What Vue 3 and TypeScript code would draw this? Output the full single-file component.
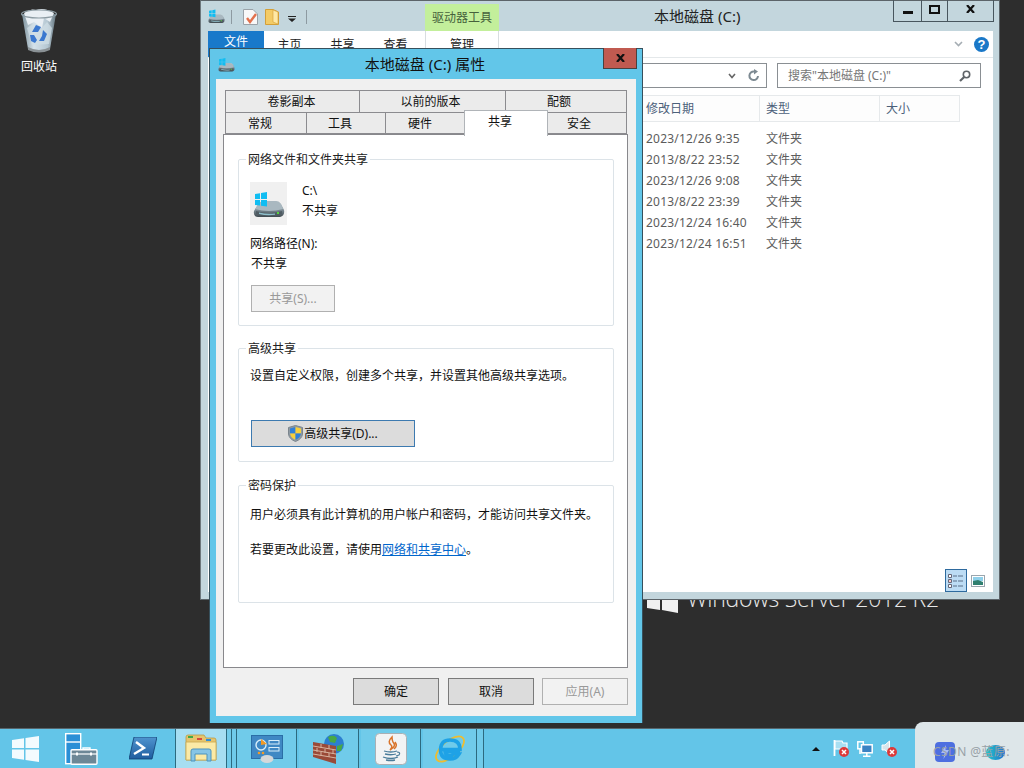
<script setup lang="ts">
const ribbonTabs = ['主页', '共享', '查看']
const rows = [
  '2023/12/26 9:35',
  '2013/8/22 23:52',
  '2023/12/26 9:08',
  '2013/8/22 23:39',
  '2023/12/24 16:40',
  '2023/12/24 16:51',
]
const tabsTop = [
  { label: '卷影副本', cls: 'w134' },
  { label: '以前的版本', cls: 'w146' },
  { label: '配额', cls: 'w121' },
]
const tabsBottom = [
  { label: '常规', cls: 'w81', active: false },
  { label: '工具', cls: 'w79', active: false },
  { label: '硬件', cls: 'w79 hw', active: false },
  { label: '共享', cls: 'w83', active: true },
  { label: '安全', cls: 'w79 sec', active: false },
]
</script>

<template>
  <div class="desktop">
    <svg class="defs" width="0" height="0" aria-hidden="true">
      <defs>
        <linearGradient id="driveBody" x1="0" y1="0" x2="0" y2="1">
          <stop offset="0" stop-color="#c9d3d8" />
          <stop offset="0.55" stop-color="#7d8c95" />
          <stop offset="1" stop-color="#3f4a50" />
        </linearGradient>
        <symbol id="drive" viewBox="0 0 32 26">
          <path d="M6 11 Q8 9 12 9 H23 Q26 9 28 12 L31 18 Q32 24 27 25 H5 Q0 25 1 19 Z" fill="url(#driveBody)" />
          <path d="M6 11 Q8 9 12 9 H23 Q26 9 28 12 L30 17 Q16 21 2 17 Z" fill="#a9b8c0" />
          <path d="M3 19 Q16 23 29 19 L29 22 Q16 25 3 22 Z" fill="#4f5c63" />
          <path d="M6 20.500 Q14 22.500 22 21.500 V22.800 Q14 24 6 22 Z" fill="#8fc0cc" />
          <rect x="24" y="20" width="2" height="2" fill="#56d23c" />
          <path d="M2 2 L7 1.200 V7 H2 Z M8 1 L14 0 V7 H8 Z M2 8 H7 V13.500 L2 13 Z M8 8 H14 V14.500 L8 13.700 Z" fill="#10bdf2" />
        </symbol>
      </defs>
    </svg>

    <div class="recycle">
      <svg width="38" height="46" viewBox="0 0 38 46">
        <defs>
          <linearGradient id="binGlass" x1="0" y1="0" x2="1" y2="0">
            <stop offset="0" stop-color="#7d929d" />
            <stop offset="0.35" stop-color="#d5e2ea" />
            <stop offset="0.75" stop-color="#b5c7d2" />
            <stop offset="1" stop-color="#65767f" />
          </linearGradient>
        </defs>
        <path d="M2 6 L8 41 Q19 47 30 41 L36 6 Z" fill="url(#binGlass)" />
        <path d="M4 5 Q10 0 16 2 Q24 -1 34 5 L30 14 L24 10 L22 20 L14 14 L8 17 Z" fill="#e9eff4" />
        <path d="M7 20 L13 16 L20 22 L27 14 L32 20 L29 36 L12 37 Z" fill="#cfdde6" opacity=".75" />
        <path d="M12 24 L16 17 L21 19 L18 24 Z M23 22 L27 26 L24 33 L19 33 L22 28 Z M10 27 L14 27 L17 32 L15 35 L11 33 Z" fill="#3b78cf" />
        <path d="M8 39 Q19 45 30 39 L30 42 Q19 47 8 42 Z" fill="#8a9195" />
        <ellipse cx="19" cy="6" rx="17.500" ry="4" fill="none" stroke="#8c9ba3" stroke-width="1.200" />
      </svg>
      <span>回收站</span>
    </div>

    <div class="wallpaper">
      <svg class="wp-logo" width="31" height="40" viewBox="0 0 31 40">
        <path d="M0 5 L13 3 V19 H0 Z M15 3 L31 0 V19 H15 Z M0 21 H13 V37 L0 35 Z M15 21 H31 V40 L15 37 Z" fill="#f0f0f0" />
      </svg>
      <span class="wp-text">Windows Server 2012 R2</span>
    </div>

    <section class="explorer">
      <header class="ex-title">
        <div class="qat">
          <svg class="q-drive" width="17" height="17"><use href="#drive" /></svg>
          <i class="q-sep"></i>
          <svg width="15" height="16" viewBox="0 0 15 16" class="q-doc">
            <path d="M.5.5 H10 L14.500 5 V15.500 H.5 Z" fill="#f8f8f8" stroke="#9aa2a8" />
            <path d="M4 9 L7 13 L13 5" fill="none" stroke="#e2714d" stroke-width="2.400" />
          </svg>
          <svg width="14" height="16" viewBox="0 0 14 16" class="q-folder">
            <path d="M.5.5 H8 L13.500 3 V15.500 H.5 Z" fill="#f3cb65" stroke="#d39f37" />
            <path d="M8 1 V13 L13 15 V3 Z" fill="#ffe9a5" stroke="#d39f37" stroke-width=".6" />
          </svg>
          <svg width="8" height="6" viewBox="0 0 8 6" class="q-arrow">
            <path d="M0 0 H8 V1 H0 Z M0 2.500 H8 L4 6 Z" fill="#222" />
          </svg>
          <i class="q-sep q-sep2"></i>
        </div>
        <div class="tool-tab">驱动器工具</div>
        <div class="ex-name">本地磁盘 (C:)</div>
        <div class="winctl">
          <span class="wc wc-min"><i></i></span>
          <span class="wc wc-max"><i></i></span>
          <span class="wc wc-close">
            <svg width="9" height="8" viewBox="0 0 9 8"><path d="M1 0 L8 8 M8 0 L1 8" stroke="#111" stroke-width="2.200" fill="none" /></svg>
          </span>
        </div>
      </header>

      <div class="ex-ribbon">
        <div class="rb-file">文件</div>
        <div v-for="t in ribbonTabs" :key="t" class="rb-tab">{{ t }}</div>
        <div class="rb-manage">管理</div>
        <div class="rb-right">
          <svg width="9" height="6" viewBox="0 0 9 6"><path d="M1 1 L4.500 4.500 L8 1" fill="none" stroke="#a5adb3" stroke-width="1.600" /></svg>
          <span class="help">?</span>
        </div>
      </div>

      <div class="ex-body">
        <div class="ex-nav">
          <div class="addr">
            <svg width="8" height="6" viewBox="0 0 8 6"><path d="M1 1 L4 4.500 L7 1" fill="none" stroke="#666" stroke-width="1.600" /></svg>
            <svg width="12" height="13" viewBox="0 0 12 13"><path d="M10 7 A4.300 4.300 0 1 1 6 2.500" fill="none" stroke="#7d8a92" stroke-width="2" /><path d="M6 0 L10 2.600 L6 5.400 Z" fill="#7d8a92" /></svg>
          </div>
          <div class="search">
            <span>搜索"本地磁盘 (C:)"</span>
            <svg width="12" height="12" viewBox="0 0 12 12"><circle cx="7.500" cy="4.500" r="3.200" fill="none" stroke="#5f6468" stroke-width="1.600" /><path d="M5.200 7 L1 11" stroke="#5f6468" stroke-width="2.200" /></svg>
          </div>
        </div>
        <div class="ex-head">
          <div class="col c-date">修改日期</div>
          <div class="col c-type">类型</div>
          <div class="col c-size">大小</div>
        </div>
        <div class="ex-rows">
          <div v-for="r in rows" :key="r" class="ex-row">
            <span class="r-date">{{ r }}</span>
            <span>文件夹</span>
          </div>
        </div>
        <div class="ex-status">
          <span class="view-on">
            <svg width="16" height="14" viewBox="0 0 16 14">
              <path d="M.5.5 H3.500 V3.500 H.5 Z M.5 5.500 H3.500 V8.500 H.5 Z M.5 10.500 H3.500 V13.500 H.5 Z" fill="#fff" stroke="#667" />
              <rect x="1.500" y="6.500" width="1" height="1" fill="#d22" />
              <path d="M5 2 H9 M10 2 H15 M5 7 H9 M10 7 H15 M5 12 H9 M10 12 H15" stroke="#5a6f88" />
            </svg>
          </span>
          <svg class="view-off" width="14" height="12" viewBox="0 0 14 12">
            <rect x=".5" y=".5" width="13" height="11" fill="#fff" stroke="#9aa6ae" />
            <rect x="2" y="2" width="10" height="4" fill="#8fd0ea" />
            <path d="M2 6 L7 5 L12 7 V10 H2 Z" fill="#2f7f6f" />
          </svg>
        </div>
      </div>
    </section>

    <section class="dialog">
      <header class="dlg-title">
        <svg class="dlg-icon" width="17" height="14"><use href="#drive" /></svg>
        <span class="dlg-name">本地磁盘 (C:) 属性</span>
        <span class="dlg-close">
          <svg width="9" height="8" viewBox="0 0 9 8"><path d="M1 0 L8 8 M8 0 L1 8" stroke="#111" stroke-width="2.200" fill="none" /></svg>
        </span>
      </header>
      <div class="dlg-inner">
        <div class="tabs">
          <div class="tab-row">
            <div v-for="t in tabsTop" :key="t.label" class="tab" :class="t.cls">{{ t.label }}</div>
          </div>
          <div class="tab-row tab-row2">
            <div v-for="t in tabsBottom" :key="t.label" class="tab" :class="[t.cls, { active: t.active }]">{{ t.label }}</div>
          </div>
        </div>

        <div class="panel">
          <div class="group g1">
            <div class="legend">网络文件和文件夹共享</div>
            <div class="share-head">
              <div class="drive-box"><svg width="32" height="26"><use href="#drive" /></svg></div>
              <div class="share-info">
                <div class="line">C:\</div>
                <div class="line">不共享</div>
              </div>
            </div>
            <div class="line path-label">网络路径(N):</div>
            <div class="line path-val">不共享</div>
            <button class="btn disabled b-share">共享(S)...</button>
          </div>

          <div class="group g2">
            <div class="legend">高级共享</div>
            <div class="line adv-text">设置自定义权限，创建多个共享，并设置其他高级共享选项。</div>
            <button class="btn focus b-adv">
              <svg width="15" height="17" viewBox="0 0 15 17">
                <path d="M7.500 .5 L14.500 2.500 V9 Q14 14 7.500 16.500 Q1 14 .5 9 V2.500 Z" fill="#8f9aa3" stroke="#7b858d" />
                <path d="M7.500 2 V8.500 H2 V3.500 Z" fill="#2f7fd8" />
                <path d="M7.500 2 L13 3.500 V8.500 H7.500 Z" fill="#f6cf3c" />
                <path d="M2 8.500 H7.500 V15 Q3 13 2 8.500 Z" fill="#f6cf3c" />
                <path d="M7.500 8.500 H13 Q12 13 7.500 15 Z" fill="#2f7fd8" />
              </svg>
              <span>高级共享(D)...</span>
            </button>
          </div>

          <div class="group g3">
            <div class="legend">密码保护</div>
            <div class="line pw1">用户必须具有此计算机的用户帐户和密码，才能访问共享文件夹。</div>
            <div class="line pw2">若要更改此设置，请使用<a class="link">网络和共享中心</a>。</div>
          </div>
        </div>

        <div class="dlg-foot">
          <button class="btn normal">确定</button>
          <button class="btn normal">取消</button>
          <button class="btn disabled">应用(A)</button>
        </div>
      </div>
    </section>

    <footer class="taskbar">
      <div class="pin p-start">
        <svg width="27" height="26" viewBox="0 0 27 26">
          <path d="M0 4 L12 2.200 V12 H0 Z M13.500 2 L27 0 V12 H13.500 Z M0 13.500 H12 V23.800 L0 22 Z M13.500 13.500 H27 V26 L13.500 24 Z" fill="#fff" opacity=".92" />
        </svg>
      </div>
      <div class="pin p-sm">
        <svg width="33" height="32" viewBox="0 0 33 32">
          <rect x=".7" y=".7" width="15" height="30" fill="#2a8fd6" stroke="#fff" stroke-width="1.400" />
          <path d="M1 9 H15" stroke="#fff" stroke-width="1.400" />
          <path d="M18 17 V15 H25 V17" fill="none" stroke="#fff" stroke-width="1.400" />
          <rect x="6" y="16.700" width="26" height="14.600" rx="1" fill="#6d8796" stroke="#fff" stroke-width="1.400" />
          <path d="M6 21 H32" stroke="#fff" stroke-width="1.200" />
          <rect x="11" y="19.500" width="2" height="3" fill="#fff" /><rect x="25" y="19.500" width="2" height="3" fill="#fff" />
        </svg>
      </div>
      <div class="pin p-ps">
        <svg width="28" height="23" viewBox="0 0 28 23">
          <defs><linearGradient id="psG" x1="0" y1="0" x2="0" y2="1"><stop offset="0" stop-color="#4f94cf" /><stop offset="1" stop-color="#1f5d9f" /></linearGradient></defs>
          <path d="M5 0 H28 L23 22 H0 Z" fill="url(#psG)" stroke="#0f3f72" stroke-width=".8" />
          <path d="M7 5 L15 11 L5 17" fill="none" stroke="#fff" stroke-width="2.400" />
          <path d="M13 17.500 H20" stroke="#fff" stroke-width="2" />
        </svg>
      </div>
      <div class="tb-btn active-app">
        <svg width="32" height="29" viewBox="0 0 32 29">
          <path d="M1 3 Q1 1 3 1 H19 L21 4 H29 Q31 4 31 6 V26 H1 Z" fill="#e6c56e" stroke="#b79a48" stroke-width=".8" />
          <rect x="3" y="2" width="5" height="2" fill="#3fa947" /><rect x="12" y="4" width="5" height="2" fill="#d6483f" /><rect x="21" y="5" width="5" height="2" fill="#2f8fd8" />
          <path d="M1 8 H31 V26 H1 Z" fill="#fbeaa6" stroke="#c9a852" stroke-width=".8" />
          <path d="M6 27 V17 Q6 15 8 15 H24 Q26 15 26 17 V27 H22 V20 H10 V27 Z" fill="#86c5e6" stroke="#4c93bd" />
        </svg>
      </div>
      <i class="tb-gap g4"></i>
      <i class="tb-gap g4"></i>
      <div class="tb-btn app-a">
        <svg width="32" height="28" viewBox="0 0 32 28">
          <rect x=".5" y=".5" width="31" height="23" fill="#3f88c4" stroke="#2a6ea6" />
          <circle cx="10" cy="10" r="5" fill="none" stroke="#d8eefa" stroke-width="1.400" />
          <path d="M10 4 L16 9 L10 10 Z" fill="#f39a25" />
          <rect x="18" y="5.500" width="10" height="3.500" fill="none" stroke="#d8eefa" /><rect x="18" y="12.500" width="10" height="3.500" fill="none" stroke="#d8eefa" />
          <circle cx="8" cy="18" r="1.300" fill="#f39a25" /><circle cx="12" cy="18" r="1.300" fill="#f39a25" />
          <ellipse cx="16" cy="24" rx="6.500" ry="4" fill="#d5d8da" />
        </svg>
      </div>
      <div class="tb-btn app-b">
        <svg width="32" height="31" viewBox="0 0 32 31">
          <circle cx="21" cy="11" r="10" fill="#2c7fd0" />
          <path d="M15 4 Q21 1 24 5 L22 10 L17 9 Z M24 13 L30 11 L28 18 L24 18 Z" fill="#48a846" />
          <path d="M0 9 L23 13 V31 L0 24 Z" fill="#9a4a38" />
          <path d="M0 13 L23 17 M0 17 L23 21 M0 21 L23 25 M8 11 V15 M16 12 V16 M4 15 V19 M12 16 V20 M20 17 V21 M8 19 V23 M16 20 V24" stroke="#d7b39f" stroke-width="1" />
        </svg>
      </div>
      <div class="tb-btn app-c">
        <svg width="32" height="32" viewBox="0 0 32 32">
          <rect x=".5" y=".5" width="31" height="31" rx="4" fill="#f2f3f4" stroke="#a9b0b5" />
          <path d="M17 4 Q12 9 16 12 Q18 14 15 17 Q22 13 18 9 Q17 7 17 4 Z M20 9 Q23 13 19 16" fill="none" stroke="#d9742b" stroke-width="1.500" />
          <path d="M9 18 Q16 20 22 18 M10 21 Q16 22.500 21 21 M8 24 Q16 27 23 24 M11 27 Q16 28 20 27" fill="none" stroke="#4b7c9a" stroke-width="1.300" />
          <path d="M22 19 Q26 19 24 22 L21 23" fill="none" stroke="#4b7c9a" stroke-width="1.200" />
        </svg>
      </div>
      <div class="tb-btn app-d">
        <svg width="32" height="32" viewBox="0 0 32 32">
          <ellipse cx="16" cy="16" rx="17" ry="8" transform="rotate(-40 16 16)" fill="none" stroke="#eebd2f" stroke-width="1.800" />
          <path d="M6.500 16.500 H26 Q26 7 16 7 Q7 7 6.500 16.500 Q6.500 26 16 26 Q22 26 25 21 H19.500 Q18 22.500 16 22.500 Q11 22.500 11 18.500 H26" fill="none" stroke="#1ea2e6" stroke-width="3.600" />
        </svg>
      </div>
      <i class="tb-gap g6"></i>
      <div class="tb-fill"></div>
      <div class="tray">
        <svg width="8" height="4" viewBox="0 0 8 4"><path d="M0 4 L4 0 L8 4 Z" fill="#111" /></svg>
        <svg width="16" height="17" viewBox="0 0 16 17">
          <path d="M1.500 0 V16" stroke="#fff" stroke-width="1.800" />
          <path d="M2 1 H9 L10 3 H14 V9 H2 Z" fill="#a8dff2" stroke="#fff" stroke-width="1.200" />
          <circle cx="11" cy="12" r="5" fill="#dc3a3a" />
          <path d="M9 10 L13 14 M13 10 L9 14" stroke="#fff" stroke-width="1.500" />
        </svg>
        <svg width="16" height="16" viewBox="0 0 16 16">
          <rect x=".8" y=".8" width="5.500" height="7" fill="#63c5e8" stroke="#fff" stroke-width="1.500" />
          <rect x="4.500" y="3.800" width="10.700" height="8" fill="#3b83c3" stroke="#fff" stroke-width="1.500" />
          <path d="M3 8 V13 M9.800 12 V15 M6 15.200 H13.500" stroke="#fff" stroke-width="1.500" />
        </svg>
        <svg width="16" height="17" viewBox="0 0 16 17">
          <path d="M1 5 H4 L8.500 1 V14 L4 10 H1 Z" fill="#d9e5ea" stroke="#fff" />
          <circle cx="11" cy="12" r="5" fill="#dc3a3a" />
          <path d="M9 10 L13 14 M13 10 L9 14" stroke="#fff" stroke-width="1.500" />
        </svg>
      </div>
    </footer>

    <div class="watermark">
      <span class="wm-logo">
        <svg width="8" height="14" viewBox="0 0 8 14"><path d="M5 0 L0 8 H3.500 L2.500 14 L8 5 H4.500 Z" fill="#a9bcf5" /></svg>
      </span>
      <span class="wm-blob"></span>
      <span class="wm-text">CSDN @蓝原:</span>
    </div>
  </div>
</template>

<style scoped>
.desktop {
  position: relative;
  width: 1024px;
  height: 768px;
  overflow: hidden;
  background: #2d2d2d;
  font: 12px/16px "Noto Sans", "Noto Sans CJK SC", sans-serif;
  color: #111;
}
.defs { position: absolute; }
svg { display: block; flex: none; }

.recycle {
  position: absolute;
  left: 20px;
  top: 8px;
  width: 38px;
  display: flex;
  flex-direction: column;
  align-items: center;
  color: #fff;
  gap: 5px;
}

.wallpaper {
  position: absolute;
  left: 647px;
  top: 573px;
  display: flex;
  align-items: flex-start;
}
.wp-text {
  margin: 5px 0 0 9px;
  font: 300 23px/40px "Open Sans", sans-serif;
  color: #e8e8e8;
  white-space: nowrap;
  letter-spacing: -.25px;
}

/* Explorer window */
.explorer {
  position: absolute;
  left: 200px;
  top: 0;
  width: 800px;
  height: 600px;
  box-sizing: border-box;
  border: 1px solid #5c6469;
  border-left-color: #6d777c;
  background: #c3d6dd;
  padding: 0 6px 7px 7px;
  display: flex;
  flex-direction: column;
}
.ex-title {
  height: 30px;
  display: flex;
  flex: none;
  position: relative;
}
.qat { width: 217px; display: flex; align-items: flex-start; flex: none; padding-top: 7px; box-sizing: border-box; }
.q-sep { width: 1px; height: 14px; background: #8d9aa1; margin: 2px 0 0 6px; }
.q-doc { margin: 1px 0 0 11px; }
.q-folder { margin: 1px 0 0 7px; }
.q-arrow { margin: 8px 0 0 9px; }
.q-sep2 { margin-left: 10px; }
.tool-tab {
  margin-top: 3px;
  width: 74px;
  height: 27px;
  background: #c3ef9b;
  color: #46613c;
  display: flex;
  align-items: center;
  justify-content: center;
  flex: none;
}
.ex-name { margin: 6px 0 0 155px; font-size: 15px; line-height: 18px; color: #222; white-space: nowrap; }
.winctl {
  position: absolute;
  right: -1px;
  top: -1px;
  height: 22px;
  display: flex;
  border: 1px solid #48565e;
  border-top: none;
  box-sizing: border-box;
}
.wc { box-sizing: border-box; display: flex; align-items: center; justify-content: center; height: 21px; }
.wc-min { width: 28px; border-right: 1px solid #48565e; }
.wc-min i { width: 10px; height: 3px; background: #111; margin-top: 4px; }
.wc-max { width: 26px; border-right: 1px solid #48565e; }
.wc-max i { width: 7px; height: 5px; border: 2px solid #111; margin-bottom: 3px; }
.wc-close { width: 45px; }
.wc-close svg { margin-bottom: 3px; }

.ex-ribbon {
  height: 26px;
  flex: none;
  background: #fff;
  border-bottom: 1px solid #e4e8ea;
  display: flex;
  align-items: flex-start;
}
.rb-file {
  width: 56px;
  height: 26px;
  background: #1979ca;
  color: #fff;
  font-size: 12px;
  line-height: 22px;
  text-align: center;
}
.rb-tab { width: 53px; margin-left: -1px; margin-right: 1px; text-align: center; line-height: 28px; color: #222; flex: none; }
.rb-manage {
  margin-left: 2px;
  width: 74px;
  height: 26px;
  box-sizing: border-box;
  border: 1px solid #d8dde0;
  border-top: none;
  border-bottom: none;
  text-align: center;
  line-height: 28px;
  color: #222;
  flex: none;
}
.rb-right { margin-left: auto; display: flex; align-items: center; gap: 11px; height: 26px; padding-right: 4px; }
.help {
  width: 15px;
  height: 15px;
  border-radius: 50%;
  background: #1a78c8;
  color: #fff;
  font: 700 13px/15px "Liberation Sans", sans-serif;
  text-align: center;
}

.ex-body { flex: 1; min-height: 0; background: #fff; display: flex; flex-direction: column; }
.ex-nav { height: 37px; flex: none; display: flex; align-items: flex-start; padding: 5px 12px 0 0; box-sizing: border-box; justify-content: flex-end; gap: 10px; }
.addr {
  width: 130px;
  height: 25px;
  box-sizing: border-box;
  border: 1px solid #8a8f93;
  border-left: none;
  display: flex;
  align-items: center;
  justify-content: flex-end;
  gap: 12px;
  padding-right: 6px;
}
.search {
  width: 204px;
  height: 25px;
  box-sizing: border-box;
  border: 1px solid #8a8f93;
  display: flex;
  align-items: center;
  justify-content: space-between;
  padding: 0 9px 0 10px;
  color: #777;
}
.ex-head { height: 27px; flex: none; display: flex; padding-left: 432px; }
.col {
  box-sizing: border-box;
  height: 27px;
  border: 1px solid #e6e9eb;
  border-left: none;
  background: #fdfdfd;
  color: #4c607a;
  line-height: 25px;
  padding-left: 6px;
  flex: none;
}
.c-date { width: 120px; }
.c-type { width: 120px; }
.c-size { width: 80px; }
.ex-rows { flex: 1; padding: 6px 0 0 438px; }
.ex-row { height: 21px; display: flex; line-height: 21px; color: #5c5c5c; }
.r-date { width: 120px; letter-spacing: .2px; white-space: nowrap; }
.ex-status { height: 23px; flex: none; display: flex; align-items: center; justify-content: flex-end; padding-right: 8px; gap: 4px; }
.view-on {
  width: 22px;
  height: 23px;
  box-sizing: border-box;
  background: #bcdcf4;
  border: 1px solid #2e6a9e;
  display: flex;
  align-items: center;
  justify-content: center;
}

/* Properties dialog */
.dialog {
  position: absolute;
  left: 209px;
  top: 48px;
  width: 434px;
  height: 675px;
  box-sizing: border-box;
  background: #62c6e9;
  border: 1px solid #37505c;
  border-bottom: none;
  padding: 0 6px 7px;
  display: flex;
  flex-direction: column;
}
.dlg-title { height: 30px; flex: none; position: relative; display: flex; align-items: center; justify-content: center; }
.dlg-icon { position: absolute; left: 2px; top: 9px; }
.dlg-name { font-size: 15px; line-height: 30px; margin: 0 2px 0 0; color: #111; }
.dlg-close {
  position: absolute;
  right: -1px;
  top: -1px;
  width: 34px;
  height: 21px;
  box-sizing: border-box;
  background: #c05a50;
  border: 1px solid #49413f;
  border-top: none;
  display: flex;
  align-items: center;
  justify-content: center;
}
.dlg-inner {
  flex: 1;
  background: #f0f0f0;
  padding: 11px 8px 0 7px;
  display: flex;
  flex-direction: column;
  min-height: 0;
}
.tabs { padding: 0 1px 0 2px; flex: none; position: relative; z-index: 1; height: 44px; }
.tab-row { display: flex; height: 22px; }
.tab-row2 { position: relative; }
.tab {
  box-sizing: border-box;
  height: 23px;
  background: #ebebeb;
  border: 1px solid #8b8b8f;
  margin-right: -1px;
  flex: none;
  text-align: center;
  line-height: 21px;
}
.tab-row2 .tab { height: 22px; line-height: 21px; padding-right: 12px; }
.tab-row2 .tab.hw { padding-right: 10px; }
.tab-row2 .tab.sec { padding-right: 16px; }
.tab-row2 .tab.active {
  height: 26px;
  margin-top: -2px;
  background: #fff;
  border-color: #b0b4b8;
  border-bottom: none;
  position: relative;
  z-index: 2;
  line-height: 21px;
}
.w134 { width: 135px; padding-right: 2px; }
.w146 { width: 147px; padding-right: 4px; }
.w121 { width: 122px; padding-right: 14px; }
.w81 { width: 82px; }
.w79 { width: 80px; }
.w83 { width: 84px; }

.panel {
  flex: 1;
  min-height: 0;
  background: #fff;
  border: 1px solid #88888c;
  padding: 24px 13px 0 14px;
  box-sizing: border-box;
}
.group {
  box-sizing: border-box;
  border: 1px solid #dce3e8;
  border-radius: 2px;
  padding: 0 11px;
}
.g1 { height: 167px; }
.g2 { height: 114px; margin-top: 22px; }
.g3 { height: 118px; margin-top: 23px; }
.legend {
  width: fit-content;
  background: #fff;
  margin: -8px 0 0 -4px;
  padding: 0 2px;
  line-height: 16px;
  color: #222;
}
.line { height: 16px; line-height: 16px; white-space: nowrap; color: #111; }
.share-head { display: flex; margin-top: 14px; }
.drive-box {
  width: 37px;
  height: 43px;
  background: #f0f0f0;
  display: flex;
  align-items: flex-end;
  justify-content: center;
  padding-bottom: 7px;
  box-sizing: border-box;
}
.share-info { margin: 1px 0 0 15px; display: flex; flex-direction: column; gap: 4px; }
.path-label { margin-top: 11px; }
.path-val { margin-top: 4px; margin-left: 1px; }
.btn {
  box-sizing: border-box;
  font: inherit;
  height: 27px;
  padding: 0;
  cursor: default;
  display: flex;
  align-items: center;
  justify-content: center;
}
.normal { width: 86px; background: #dcdcdc; border: 1px solid #7a7a7a; color: #111; }
.disabled { width: 84px; background: #f2f2f2; border: 1px solid #b0b0b0; color: #999; }
.focus { width: 164px; background: #dcdcdc; border: 1px solid #3d7ab0; color: #111; gap: 1px; }
.b-share { margin: 13px 0 0 1px; }
.adv-text { margin-top: 11px; }
.b-adv { margin: 36px 0 0 1px; }
.pw1 { margin-top: 13px; }
.pw2 { margin-top: 19px; }
.link { color: #0066cc; text-decoration: underline; }
.dlg-foot { height: 48px; flex: none; display: flex; justify-content: flex-end; align-items: flex-start; padding-top: 10px; box-sizing: border-box; gap: 8px; }
.dlg-foot .btn:last-child { width: 86px; }
.dlg-foot .btn:first-child { margin-right: 1px; }

/* Taskbar */
.taskbar {
  position: absolute;
  left: 0;
  right: 0;
  bottom: 0;
  height: 40px;
  box-sizing: border-box;
  background: #63c5e8;
  border-top: 1px solid #56656c;
  display: flex;
  align-items: stretch;
}
.pin { display: flex; align-items: center; justify-content: center; flex: none; }
.p-start { width: 50px; }
.p-sm { width: 47px; margin-left: 8px; }
.p-ps { width: 49px; margin-left: 13px; margin-right: 8px; }
.tb-btn {
  box-sizing: border-box;
  border-right: 1px solid #2c6a7f;
  background: #70cbea;
  display: flex;
  align-items: center;
  justify-content: center;
  flex: none;
  margin-right: 2px;
  width: 60px;
}
.active-app {
  width: 52px;
  margin-right: 0;
  background: #a6def2;
  border-left: 1px solid #2c6a7f;
}
.tb-gap { flex: none; border-right: 1px solid #2c6a7f; background: #70cbea; }
.g4 { width: 4px; }
.app-d { width: 54px; margin-right: 0; }
.g6 { width: 6px; }
.tb-fill { flex: 1; }
.tray {
  display: flex;
  align-items: center;
  gap: 8px;
  padding: 0 127px 0 0;
  flex: none;
}
.tray svg:first-child { margin-right: 5px; }

.watermark {
  position: absolute;
  right: 0;
  bottom: 0;
  width: 109px;
  height: 46px;
  background: #dde6e9;
  border-top-left-radius: 8px;
}
.wm-logo {
  position: absolute;
  left: 20px;
  top: 20px;
  width: 20px;
  height: 20px;
  border-radius: 4px;
  background: #4d6fe0;
  display: flex;
  align-items: center;
  justify-content: center;
}
.wm-blob {
  position: absolute;
  left: 71px;
  top: 23px;
  width: 19px;
  height: 15px;
  border-radius: 50%;
  background: linear-gradient(90deg, #23c8c8, #1f6fd0);
}
.wm-text {
  position: absolute;
  left: 18px;
  top: 22px;
  color: #98a1a6;
  font-size: 12px;
  line-height: 16px;
  letter-spacing: .4px;
  white-space: nowrap;
}
</style>
